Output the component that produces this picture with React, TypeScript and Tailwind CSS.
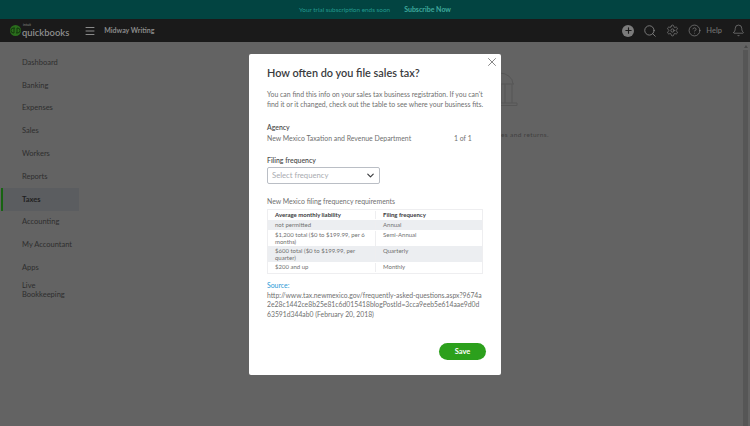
import React from "react";
import { ChevronDown, Plus, Search, Settings, CircleHelp, Bell, X, Menu } from "lucide-react";

const navItems = ["Dashboard", "Banking", "Expenses", "Sales", "Workers", "Reports", "Taxes", "Accounting", "My Accountant", "Apps"];

const rows = [
  { liability: "not permitted", frequency: "Annual", shaded: true },
  { liability: "$1,200 total ($0 to $199.99, per 6 months)", frequency: "Semi-Annual", shaded: false },
  { liability: "$600 total ($0 to $199.99, per quarter)", frequency: "Quarterly", shaded: true },
  { liability: "$200 and up", frequency: "Monthly", shaded: false },
];

function Logo() {
  return (
    <div className="flex items-center gap-[1px]">
      <svg width="11" height="11" viewBox="0 0 22 22" className="mt-[1px]">
        <circle cx="11" cy="11" r="11" fill="#2a6e1c" />
        <path d="M9 6H7a5 5 0 0 0 0 10h1V6zM13 16h2a5 5 0 0 0 0-10h-1v10z" fill="none" stroke="#0e2a0a" strokeWidth="1.6" />
      </svg>
      <div className="flex flex-col">
        <span className="text-[3.5px] leading-[4px] text-[#8a8a8a] ml-[1px]">intuit</span>
        <span className="text-[9.4px] leading-[11.3px] font-semibold text-[#8f8f8f]">quickbooks</span>
      </div>
    </div>
  );
}

function Sidebar() {
  return (
    <aside className="w-[79px] shrink-0 pt-[9px] text-[7.5px] text-[#2e2e2e]">
      {navItems.map((item) =>
        item === "Taxes" ? (
          <div key={item} className="h-[22.8px] flex items-center pl-[20px] ml-[1px] bg-[#5b5d60] border-l-[2px] border-[#176312] font-bold text-[#1f1f1f]">
            <span className="-ml-[1px]">{item}</span>
          </div>
        ) : (
          <div key={item} className="h-[22.8px] flex items-center pl-[22px]">
            {item}
          </div>
        )
      )}
      <div className="pl-[22px] pt-[2px] leading-[9px]">
        Live
        <br />
        Bookkeeping
      </div>
    </aside>
  );
}

function TaxDialog() {
  return (
    <div className="absolute left-[249px] top-[54px] w-[252px] h-[321px] bg-white rounded-[2px] pl-[18px] pr-[17px] pt-[12px] text-[#707070] text-[6.9px]">
      <X size={14} strokeWidth={1.5} className="absolute right-[2px] top-[1px] text-[#777777]" />
      <h2 className="text-[10.9px] leading-[13px] font-semibold text-[#393a3d]">How often do you file sales tax?</h2>
      <p className="mt-[10px] leading-[10px] whitespace-nowrap">
        You can find this info on your sales tax business registration. If you can't
        <br />
        find it or it changed, check out the table to see where your business fits.
      </p>
      <div className="mt-[13px] font-semibold text-[#505050] leading-[10px]">Agency</div>
      <div className="mt-[1px] flex leading-[10px]">
        <span className="w-[187px]">New Mexico Taxation and Revenue Department</span>
        <span>1 of 1</span>
      </div>
      <div className="mt-[12px] font-semibold text-[#505050] leading-[10px]">Filing frequency</div>
      <div className="mt-[2px] w-[113px] h-[17px] border border-[#babec5] rounded-[2px] flex items-center justify-between pl-[4px] pr-[3px]">
        <span className="text-[#a9abb0] text-[7.7px]">Select frequency</span>
        <ChevronDown size={11} strokeWidth={2.5} className="text-[#393a3d]" />
      </div>
      <div className="mt-[12px] leading-[10px]">New Mexico filing frequency requirements</div>
      <div className="mt-[3px] w-[216px] border border-[#eeeef0] text-[6px] leading-[7.5px]">
        <div className="flex h-[10px] items-center font-bold text-[#393a3d]">
          <div className="w-[107px] pl-[7px]">Average monthly liability</div>
          <div className="pl-[7px] border-l border-[#eeeef0]">Filing frequency</div>
        </div>
        {rows.map((row) => (
          <div key={row.frequency} className={row.shaded ? "flex min-h-[10.25px] bg-[#eceef1] py-[0.5px]" : "flex min-h-[10.25px] bg-white py-[0.5px]"}>
            <div className="w-[107px] px-[7px]">{row.liability}</div>
            <div className="pl-[7px] border-l border-[#eeeef0]">{row.frequency}</div>
          </div>
        ))}
      </div>
      <div className="mt-[7px] text-[#2c9ad6] leading-[9.5px]">Source:</div>
      <div className="mt-[0.5px] leading-[9.5px] whitespace-nowrap text-[6.8px]">
        http://www.tax.newmexico.gov/frequently-asked-questions.aspx?9674a
        <br />
        2e28c1442ce8b25e81c6d015418blogPostId=3cca9eeb5e614aae9d0d
        <br />
        63591d344ab0 (February 20, 2018)
      </div>
      <button className="absolute right-[15px] bottom-[15px] w-[47px] h-[17px] rounded-full bg-[#2ca01c] text-white text-[7.5px] font-bold">Save</button>
    </div>
  );
}

export default function App() {
  return (
    <div className="relative w-[750px] h-[426px] overflow-hidden bg-[#636363] flex flex-col font-['Lato',sans-serif]">
      <div className="h-[19px] shrink-0 bg-[#024441] flex items-center justify-center gap-[14px] text-[#229a8e]">
        <span className="text-[6.4px]">Your trial subscription ends soon</span>
        <span className="text-[7px] font-bold text-[#3fa99c]">Subscribe Now</span>
      </div>
      <header className="h-[23px] shrink-0 bg-[#1a1a1a] flex items-center pl-[10px] pr-[5px] text-[#8a8a8a]">
        <Logo />
        <Menu size={12} className="ml-[15px] -mr-[1px]" />
        <span className="ml-[9px] text-[7px] font-bold">Midway Writing</span>
        <div className="ml-auto flex items-center">
          <div className="w-[12px] h-[12px] rounded-full bg-[#7b7b7b] flex items-center justify-center">
            <Plus size={9} strokeWidth={3} className="text-[#1a1a1a]" />
          </div>
          <Search size={14} strokeWidth={1.4} className="ml-[9px]" />
          <Settings size={13} strokeWidth={1.2} className="ml-[9px]" />
          <CircleHelp size={13} strokeWidth={1.2} className="ml-[9px]" />
          <span className="ml-[5px] text-[7.5px] font-semibold text-[#6e6e6e]">Help</span>
          <Bell size={13} strokeWidth={1.2} className="ml-[10px]" />
        </div>
      </header>
      <div className="flex flex-1 min-h-0">
        <Sidebar />
        <main className="flex-1 relative">
          <div className="absolute left-[401px] top-[29px] text-[#565656]">
            <svg width="38" height="35" viewBox="0 0 38 35" fill="none" stroke="currentColor" strokeWidth="1">
              <path d="M3 13h31M6 13a13.500 11 0 0 1 27 0M19.500 2V0M8 13v19M13 13v19M18 13v19M21 13v19M25 13v19M32 13v19M2 32h35v2.500H2z" />
            </svg>
          </div>
          <div className="absolute left-[422px] top-[88px] text-[6.5px] text-[#3f3f3f] tracking-[0.4px] whitespace-nowrap">es and returns.</div>
        </main>
        <div className="relative w-[5px] shrink-0 mr-[2px] mt-[8px] bg-[#565656]">
          <div className="absolute -top-[5px] left-[1px] border-x-[2px] border-b-[3px] border-x-transparent border-b-[#484848]" />
        </div>
      </div>
      <TaxDialog />
    </div>
  );
}
